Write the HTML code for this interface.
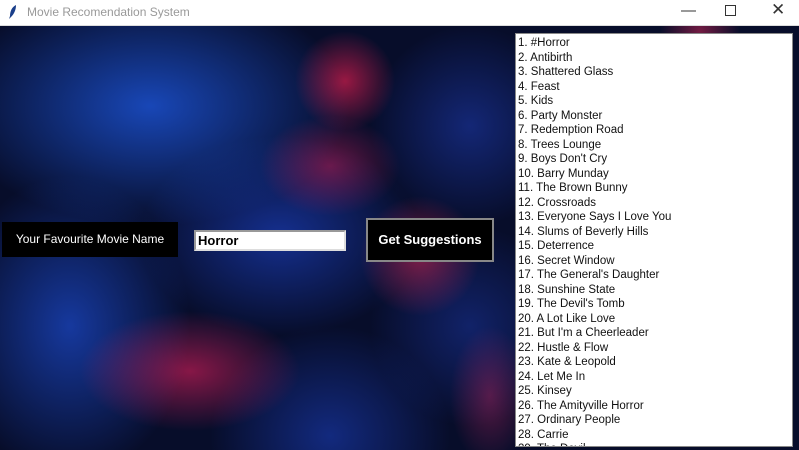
<!DOCTYPE html>
<html><head><style>
*{margin:0;padding:0;box-sizing:border-box}
body{width:799px;height:450px;overflow:hidden;font-family:"Liberation Sans",sans-serif;background:#fff;position:relative}
.tb{position:absolute;left:0;top:0;width:799px;height:26px;background:#fff;border-bottom:1px solid #ddd}
.tb .t{position:absolute;left:27px;top:5px;font-size:12px;color:#999}
.tb .c{position:absolute;top:2px;font-size:15px;color:#333}
.bg{position:absolute;left:0;top:26px;width:799px;height:424px;background:
radial-gradient(ellipse 50px 50px at 345px 55px,rgba(230,30,80,.65),transparent),
radial-gradient(ellipse 70px 50px at 330px 140px,rgba(200,30,90,.5),transparent),
radial-gradient(ellipse 60px 60px at 420px 230px,rgba(220,40,90,.55),transparent),
radial-gradient(ellipse 110px 60px at 190px 345px,rgba(220,30,90,.6),transparent),
radial-gradient(ellipse 40px 70px at 490px 370px,rgba(200,40,100,.4),transparent),
radial-gradient(ellipse 40px 40px at 700px 5px,rgba(220,40,90,.5),transparent),
radial-gradient(ellipse 200px 120px at 150px 80px,rgba(30,90,230,.75),transparent),
radial-gradient(ellipse 120px 150px at 70px 300px,rgba(30,80,220,.65),transparent),
radial-gradient(ellipse 140px 100px at 280px 210px,rgba(30,70,210,.6),transparent),
radial-gradient(ellipse 120px 110px at 330px 410px,rgba(30,70,210,.5),transparent),
radial-gradient(ellipse 100px 100px at 470px 100px,rgba(30,60,180,.55),transparent),
radial-gradient(ellipse 100px 100px at 470px 300px,rgba(30,60,180,.45),transparent),
#070d2a}
.lab{position:absolute;left:2px;top:222px;width:176px;height:35px;background:#000;color:#fff;font-size:12px;line-height:35px;text-align:center}
.ent{position:absolute;left:194px;top:230px;width:152px;height:21px;background:#fff;border:2px solid #999;border-right-color:#ddd;border-bottom-color:#ddd;font-weight:bold;font-size:13px;padding-left:2px;line-height:17px;color:#000}
.btn{position:absolute;left:366px;top:218px;width:128px;height:44px;background:#000;border:2px solid #888;color:#fff;font-weight:bold;font-size:13px;text-align:center;line-height:40px}
.lb{position:absolute;left:515px;top:33px;width:278px;height:414px;background:#fff;border:1px solid #888;overflow:hidden;padding:2px 0 0 2px;font-size:11.5px;line-height:14.5px;color:#111}
</style></head><body>
<div class="tb"><svg style="position:absolute;left:8px;top:5px" width="10" height="14" viewBox="0 0 10 14"><path d="M8 0C4 2 2 6 2 11L1 14 3 12C6 9 8 5 8 0Z" fill="#1a3f8a"/></svg><span class="t">Movie Recomendation System</span>
<span class="c" style="left:681px">&#8212;</span><span style="position:absolute;left:725px;top:5px;width:11px;height:11px;border:1px solid #333"></span><span class="c" style="left:771px;font-size:17px;top:0">&#10005;</span></div>
<div class="bg"></div>
<div class="lab">Your Favourite Movie Name</div>
<div class="ent">Horror</div>
<div class="btn">Get Suggestions</div>
<div class="lb">1. #Horror<br>2. Antibirth<br>3. Shattered Glass<br>4. Feast<br>5. Kids<br>6. Party Monster<br>7. Redemption Road<br>8. Trees Lounge<br>9. Boys Don't Cry<br>10. Barry Munday<br>11. The Brown Bunny<br>12. Crossroads<br>13. Everyone Says I Love You<br>14. Slums of Beverly Hills<br>15. Deterrence<br>16. Secret Window<br>17. The General's Daughter<br>18. Sunshine State<br>19. The Devil's Tomb<br>20. A Lot Like Love<br>21. But I'm a Cheerleader<br>22. Hustle &amp; Flow<br>23. Kate &amp; Leopold<br>24. Let Me In<br>25. Kinsey<br>26. The Amityville Horror<br>27. Ordinary People<br>28. Carrie<br>29. The Devil</div>
</body></html>
